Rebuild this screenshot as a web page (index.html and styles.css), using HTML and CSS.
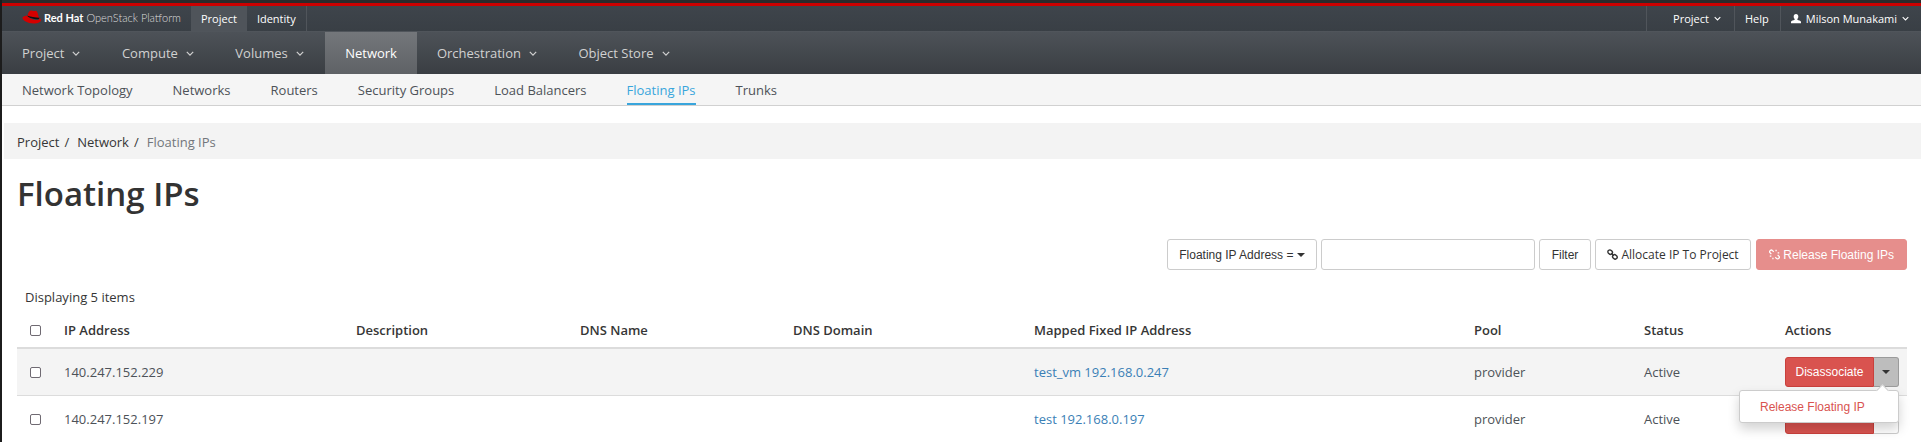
FILE: index.html
```html
<!DOCTYPE html>
<html lang="en">
<head>
  <meta charset="UTF-8" />
  <title>Floating IPs - Red Hat OpenStack Platform</title>
  <link rel="stylesheet" href="styles.css">
</head>
<body>
  <header class="masthead">
    <div class="brand">
      <svg class="brand-hat" viewBox="0 0 20 14" width="20" height="14">
        <path fill="#d40000" d="M5.500 6C6 3 7 .5 9 .5c1 0 1.800.6 2.700.6.900 0 1.500-.5 2.300-.3 1.300.3 1.900 3 2.500 5.400.2.900.4 1.500.8 2.100C13 7.600 8.500 7 5.500 6z"/>
        <path fill="#101010" d="M5.500 5.700C8.500 6.700 13 7.500 17.300 7.700c.6.700 0 1.600-1.800 1.600-3.500 0-8.300-1.400-10.300-3z"/>
        <path fill="#d40000" d="M4.900 5.600C2.300 6 .5 6.800.5 8c0 2.300 5 5.500 11 5.500 4.500 0 7.500-1.500 7.500-3.500 0-.9-.6-1.600-1.500-2.100.2 1.400-.8 2.200-2.700 2.200-3.500 0-8.300-1.800-9.900-4.500z"/>
      </svg>
      <span class="brand-name">Red Hat</span>
      <span class="brand-product">OpenStack Platform</span>
    </div>
    <nav class="context-tabs">
      <a class="context-tab active">Project</a>
      <a class="context-tab">Identity</a>
    </nav>
    <nav class="util-nav">
      <a class="util-item util-project">Project
        <svg class="chev" viewBox="0 0 10 6" width="7" height="5"><path d="M1 1l4 4 4-4" /></svg>
      </a>
      <a class="util-item util-help">Help</a>
      <a class="util-item util-user">
        <svg class="user-icon" viewBox="0 0 12 12" width="10" height="10"><path fill="#fff" d="M6 0c1.800 0 2.800 1.300 2.800 3.100 0 1.200-.5 2.300-1.200 2.900v1c1.600.6 3.800 1.300 4.400 2.200V11H0V9.200C.6 8.300 2.800 7.600 4.400 7V6C3.700 5.400 3.200 4.300 3.200 3.100 3.200 1.300 4.200 0 6 0z"/></svg>
        <span>Milson Munakami</span>
        <svg class="chev" viewBox="0 0 10 6" width="7" height="5"><path d="M1 1l4 4 4-4" /></svg>
      </a>
    </nav>
  </header>

  <nav class="main-nav">
    <a class="main-item">Project <svg class="chev" viewBox="0 0 10 6" width="8" height="5"><path d="M1 1l4 4 4-4" /></svg></a>
    <a class="main-item">Compute <svg class="chev" viewBox="0 0 10 6" width="8" height="5"><path d="M1 1l4 4 4-4" /></svg></a>
    <a class="main-item">Volumes <svg class="chev" viewBox="0 0 10 6" width="8" height="5"><path d="M1 1l4 4 4-4" /></svg></a>
    <a class="main-item active">Network</a>
    <a class="main-item">Orchestration <svg class="chev" viewBox="0 0 10 6" width="8" height="5"><path d="M1 1l4 4 4-4" /></svg></a>
    <a class="main-item">Object Store <svg class="chev" viewBox="0 0 10 6" width="8" height="5"><path d="M1 1l4 4 4-4" /></svg></a>
  </nav>

  <nav class="sub-nav">
    <a class="sub-item">Network Topology</a>
    <a class="sub-item">Networks</a>
    <a class="sub-item">Routers</a>
    <a class="sub-item">Security Groups</a>
    <a class="sub-item">Load Balancers</a>
    <a class="sub-item active">Floating IPs</a>
    <a class="sub-item">Trunks</a>
  </nav>

  <ol class="breadcrumb">
    <li><a>Project</a><span class="sep">/</span></li>
    <li><a>Network</a><span class="sep">/</span></li>
    <li class="current">Floating IPs</li>
  </ol>

  <main class="content">
    <h1 class="page-title">Floating IPs</h1>

    <form class="actions-bar">
      <button type="button" class="btn filter-select">Floating IP Address = <span class="caret"></span></button>
      <input type="text" class="filter-input" />
      <button type="button" class="btn filter-btn">Filter</button>
      <button type="button" class="btn allocate-btn">
        <svg class="btn-icon" viewBox="0 0 14 14" width="11" height="11"><g fill="none" stroke="#333" stroke-width="1.800"><rect x="1" y="1.500" width="6" height="5" rx="2.400" transform="rotate(45 4 4)"/><rect x="7" y="7.500" width="6" height="5" rx="2.400" transform="rotate(45 10 10)"/><path d="M5.500 5.500l3 3"/></g></svg>
        Allocate IP To Project
      </button>
      <button type="button" class="btn release-btn">
        <svg class="btn-icon" viewBox="0 0 14 14" width="11" height="11"><g fill="none" stroke="#fff" stroke-width="1.600"><path d="M3 6.500 1.500 5a2 2 0 0 1 3-3L6 3.500"/><path d="M11 7.500 12.500 9a2 2 0 0 1-3 3L8 10.500"/><path d="M1 9h2M5 13v-2M13 5h-2M9 1v2"/></g></svg>
        Release Floating IPs
      </button>
    </form>

    <p class="item-count">Displaying 5 items</p>

    <table class="ip-table">
      <colgroup>
        <col class="col-check"><col class="col-ip"><col class="col-desc"><col class="col-dns"><col class="col-domain"><col class="col-mapped"><col class="col-pool"><col class="col-status"><col class="col-actions">
      </colgroup>
      <thead>
        <tr>
          <th class="check-cell"><input type="checkbox" /></th>
          <th>IP Address</th>
          <th>Description</th>
          <th>DNS Name</th>
          <th>DNS Domain</th>
          <th>Mapped Fixed IP Address</th>
          <th>Pool</th>
          <th>Status</th>
          <th>Actions</th>
        </tr>
      </thead>
      <tbody>
        <tr class="hovered">
          <td class="check-cell"><input type="checkbox" /></td>
          <td>140.247.152.229</td>
          <td></td>
          <td></td>
          <td></td>
          <td><a class="link">test_vm 192.168.0.247</a></td>
          <td>provider</td>
          <td>Active</td>
          <td>
            <div class="btn-group">
              <button type="button" class="btn danger-btn">Disassociate</button>
              <button type="button" class="btn caret-btn open"><span class="caret"></span></button>
              <div class="dropdown-menu"><a>Release Floating IP</a></div>
            </div>
          </td>
        </tr>
        <tr>
          <td class="check-cell"><input type="checkbox" /></td>
          <td>140.247.152.197</td>
          <td></td>
          <td></td>
          <td></td>
          <td><a class="link">test 192.168.0.197</a></td>
          <td>provider</td>
          <td>Active</td>
          <td>
            <div class="btn-group">
              <button type="button" class="btn danger-btn">Disassociate</button>
              <button type="button" class="btn caret-btn"><span class="caret"></span></button>
            </div>
          </td>
        </tr>
      </tbody>
    </table>
  </main>
</body>
</html>
```

FILE: styles.css
```css
html, body {
  height: 442px;
  overflow: hidden;
}

body {
  margin: 0;
  border-left: 2px solid #1c1c1c;
  font-family: "Open Sans", sans-serif;
  font-size: 13px;
  color: #363636;
  background-color: #fff;
}

a {
  text-decoration: none;
}

.chev {
  fill: none;
  stroke: currentColor;
  stroke-width: 1.5;
}

/* top bar */
.masthead {
  display: flex;
  height: 31px;
  box-sizing: border-box;
  border-top: 3px solid #2b2b2b;
  box-shadow: inset 0 3px 0 #cc0000;
  background: linear-gradient(#3f454c, #393f45);
  padding-top: 3px;
  color: #fff;
  font-size: 11px;
}

.brand {
  display: flex;
  align-items: center;
  width: 189px;
  padding-left: 20px;
  padding-bottom: 3px;
  box-sizing: border-box;
  font-family: "Lato", sans-serif;
  font-size: 11px;
  white-space: nowrap;
}

.brand-hat {
  margin-right: 2px;
}

.brand-name {
  font-weight: 700;
  margin-right: 3px;
}

.brand-product {
  font-weight: 300;
  color: #dcdcdc;
}

.context-tabs {
  display: flex;
  border-right: 1px solid #50555b;
}

.context-tab {
  display: flex;
  align-items: center;
  padding: 0 10px;
  color: #fff;
}

.context-tab.active {
  background-color: #4f545a;
}

.util-nav {
  display: flex;
  margin-left: auto;
}

.util-item {
  display: flex;
  align-items: center;
  padding: 0 10px;
  border-left: 1px solid #50555b;
  color: #fff;
}

.util-project {
  gap: 5px;
  padding: 0 13px 0 26px;
}

.util-help {
  padding-right: 11px;
}

.util-user {
  gap: 5px;
  padding-right: 12px;
}

/* main navigation */
.main-nav {
  display: flex;
  height: 43px;
  box-sizing: border-box;
  border-top: 1px solid #50555b;
  background: linear-gradient(#4d5258, #3a3e43);
}

.main-item {
  display: flex;
  align-items: center;
  gap: 8px;
  padding: 0 21.5px 0 20px;
  font-size: 13px;
  color: #d1d1d1;
  white-space: nowrap;
}

.main-item.active {
  padding-right: 20px;
  background: linear-gradient(#74777b, #5f6266);
  color: #fff;
}

/* second level tabs */
.sub-nav {
  display: flex;
  height: 32px;
  box-sizing: border-box;
  gap: 40px;
  padding-left: 20px;
  background-color: #f5f5f5;
  border-bottom: 1px solid #d1d1d1;
}

.sub-item {
  display: flex;
  align-items: center;
  height: 31px;
  box-sizing: border-box;
  font-size: 13px;
  color: #4d5258;
}

.sub-item.active {
  color: #39a5dc;
  border-bottom: 2px solid #39a5dc;
  padding-top: 2px;
}

/* breadcrumb */
.breadcrumb {
  display: flex;
  list-style: none;
  margin: 17px 0 0 2px;
  padding: 2px 0 0 13px;
  box-sizing: border-box;
  height: 36px;
  align-items: center;
  background-color: #f3f3f3;
  font-size: 13px;
}

.breadcrumb a {
  color: #363636;
}

.breadcrumb .sep {
  margin: 0 8px 0 5px;
}

.breadcrumb .current {
  color: #72767b;
}

/* page */
.content {
  padding: 0 14px 0 15px;
}

.page-title {
  margin: 13px 0 0;
  font-size: 33px;
  line-height: 44px;
  font-weight: 550;
  color: #333;
}

.actions-bar {
  display: flex;
  justify-content: flex-end;
  align-items: center;
  gap: 4px;
  margin-top: 23px;
}

.btn {
  height: 31px;
  box-sizing: border-box;
  border: 1px solid #ccc;
  border-radius: 3px;
  background-color: #fff;
  color: #333;
  font-family: "Liberation Sans", sans-serif;
  font-size: 12px;
  padding: 0;
}

.filter-select {
  width: 150px;
}

.caret {
  display: inline-block;
  border-top: 4px solid #333;
  border-left: 4px solid transparent;
  border-right: 4px solid transparent;
  vertical-align: 2px;
}

.filter-input {
  width: 214px;
  height: 31px;
  box-sizing: border-box;
  border: 1px solid #ccc;
  border-radius: 3px;
}

.filter-btn {
  width: 52px;
}

.allocate-btn {
  width: 156px;
  font-family: "Open Sans", sans-serif;
  font-size: 12px;
}

.release-btn {
  width: 151px;
  margin-left: 1px;
  background-color: #e68e8c;
  border-color: #e68e8c;
  color: #fff;
}

.btn-icon {
  vertical-align: -1px;
}

.item-count {
  margin: 19px 0 0 8px;
  font-size: 13px;
  line-height: 17px;
  color: #363636;
}

/* table */
.ip-table {
  width: 1890px;
  table-layout: fixed;
  border-collapse: collapse;
  margin-top: 7px;
  font-size: 13px;
}

.col-check { width: 39px; }
.col-ip { width: 292px; }
.col-desc { width: 224px; }
.col-dns { width: 213px; }
.col-domain { width: 241px; }
.col-mapped { width: 440px; }
.col-pool { width: 170px; }
.col-status { width: 141px; }
.col-actions { width: 130px; }

.ip-table th {
  height: 34px;
  padding: 0 8px;
  text-align: left;
  font-weight: 600;
  color: #363636;
  border-bottom: 2px solid #dcdcdc;
}

.ip-table td {
  height: 47px;
  padding: 1px 8px 0;
  box-sizing: border-box;
  border-bottom: 1px solid #dcdcdc;
  color: #4d5258;
}

.ip-table .hovered td {
  background-color: #f4f4f4;
}

.check-cell input {
  appearance: none;
  display: block;
  box-sizing: border-box;
  width: 11px;
  height: 11px;
  margin: 0 0 0 5px;
  border: 1px solid #6f6a72;
  border-radius: 2px;
  background-color: #fff;
}

.link {
  color: #3b7fb6;
}

.btn-group {
  position: relative;
  display: flex;
  width: 114px;
}

.danger-btn {
  width: 89px;
  height: 30px;
  background-color: #d9534f;
  border-color: #c9403c;
  border-radius: 3px 0 0 3px;
  color: #fff;
}

.caret-btn {
  width: 25px;
  height: 30px;
  border-left: 0;
  border-radius: 0 3px 3px 0;
}

.caret-btn.open {
  background-color: #bdbdbd;
  border-color: #9b9b9b;
}

/* popup lies over the next row */
.dropdown-menu {
  position: absolute;
  top: 33px;
  right: 0;
  z-index: 2;
  width: 160px;
  height: 33px;
  box-sizing: border-box;
  display: flex;
  align-items: center;
  padding-left: 20px;
  background-color: #fff;
  border: 1px solid #ccc;
  border-radius: 3px;
  box-shadow: 0 6px 12px rgba(0, 0, 0, 0.175);
  font-family: "Liberation Sans", sans-serif;
  font-size: 12px;
  color: #d9534f;
}

.dropdown-menu::before {
  content: "";
  position: absolute;
  top: -5px;
  right: 11px;
  width: 8px;
  height: 8px;
  background-color: #fff;
  border-top: 1px solid #ccc;
  border-left: 1px solid #ccc;
  transform: rotate(45deg);
}
```
